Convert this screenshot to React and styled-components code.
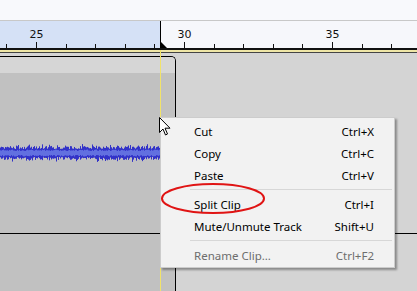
import React from "react";
import styled, { createGlobalStyle } from "styled-components";

const Global = createGlobalStyle`
  html, body { margin: 0; padding: 0; background: #d4d4d4; }
  #root { width: 417px; height: 291px; }
`;

const Screen = styled.div`
  position: relative;
  width: 417px;
  height: 291px;
  overflow: hidden;
  display: flex;
  flex-direction: column;
  font-family: "Noto Sans", "Liberation Sans", sans-serif;
`;

const TopBand = styled.div`
  height: 20px;
  flex: none;
  background: #f8f9fc;
  border-bottom: 1px solid #c8c8c8;
`;

const Ruler = styled.div`
  position: relative;
  height: 27px;
  flex: none;
  display: flex;
  background: #f6f7fb;
  border-bottom: 2px solid #111;
`;

const Selection = styled.div`
  width: 160px;
  flex: none;
  background: #d5e1f6;
  border-right: 1px solid #000;
`;

const TickLayer = styled.svg`
  position: absolute;
  left: 0;
  top: 0;
`;

const RulerLabel = styled.span`
  position: absolute;
  top: 7px;
  transform: translateX(-50%);
  font-family: "DejaVu Sans", sans-serif;
  font-size: 11px;
  line-height: 14px;
  color: #111;
`;

const Rail = styled.div`
  flex: none;
  height: 2px;
  background: #efe6a6;
  border-bottom: 1px solid #444;
`;

const Track = styled.div`
  flex: 1;
  display: flex;
  flex-direction: column;
  background: #d4d4d4;
`;

const Channel = styled.div`
  display: flex;
  height: ${(p) => p.$h}px;
  flex: ${(p) => (p.$h ? "none" : "1")};
  border-bottom: ${(p) => (p.$divider ? "1px solid #000" : "none")};
`;

const Clip = styled.div`
  width: 176px;
  flex: none;
  box-sizing: border-box;
  display: flex;
  flex-direction: column;
  background: #c1c1c1;
  border-right: 1px solid #000;
  margin-top: ${(p) => (p.$top ? 3 : 0)}px;
  border-top: ${(p) => (p.$top ? "1px solid #000" : "none")};
  border-top-right-radius: ${(p) => (p.$top ? 5 : 0)}px;
`;

const ClipHeader = styled.div`
  height: 16px;
  flex: none;
  background: #d6d6d6;
  border-top-right-radius: 4px;
`;

const ClipBody = styled.div`
  flex: 1;
  display: flex;
  align-items: center;
`;

const EditLine = styled.div`
  position: absolute;
  left: 160px;
  top: 50px;
  bottom: 0;
  width: 1px;
  background: #f1e36a;
`;

const Menu = styled.div`
  position: absolute;
  left: 160px;
  top: 117px;
  width: 235px;
  box-sizing: border-box;
  background: #f2f2f2;
  border: 1px solid #cccccc;
  box-shadow: 2px 2px 2px rgba(0, 0, 0, 0.35);
  padding: 2px 0 1px;
  display: flex;
  flex-direction: column;
`;

const Item = styled.div`
  height: 22px;
  display: flex;
  align-items: center;
  justify-content: space-between;
  padding: 0 20px 0 33px;
  font-size: 11.5px;
  color: ${(p) => (p.$disabled ? "#6d6d6d" : "#000")};
`;

const Separator = styled.div`
  height: 7px;
  display: flex;
  align-items: center;
  margin: 0 2px 0 29px;
  &::after {
    content: "";
    flex: 1;
    height: 1px;
    background: #d7d7d7;
  }
`;

const Overlay = styled.svg`
  position: absolute;
  pointer-events: none;
`;

function rand(seed) {
  let s = seed;
  return () => {
    s = (s * 9301 + 49297) % 233280;
    return s / 233280;
  };
}

function Waveform() {
  const r = rand(7);
  const w = 176;
  let peak = "";
  let rms = "";
  for (let x = 0; x < w; x++) {
    const up = 4 + r() * 3 + (r() > 0.85 ? 2 : 0);
    const dn = 4 + r() * 3 + (r() > 0.85 ? 2 : 0);
    peak += `M${x + 0.5},${10 - up}V${10 + dn}`;
    const ru = 2 + r() * 1.5;
    const rd = 2 + r() * 1.5;
    rms += `M${x + 0.5},${10 - ru}V${10 + rd}`;
  }
  return (
    <svg width={w} height={20} style={{ display: "block", marginTop: "-1px" }}>
      <path d={peak} stroke="#3232c8" strokeWidth="1" />
      <path d={rms} stroke="#6270e0" strokeWidth="1" />
    </svg>
  );
}

const ticks = [];
for (let n = 24; n <= 38; n++) ticks.push(n);
const tx = (n) => Math.round(36 + (n - 25) * 29.6) + 0.5;

const items = [
  { label: "Cut", key: "Ctrl+X" },
  { label: "Copy", key: "Ctrl+C" },
  { label: "Paste", key: "Ctrl+V" },
  { sep: true },
  { label: "Split Clip", key: "Ctrl+I" },
  { label: "Mute/Unmute Track", key: "Shift+U" },
  { sep: true },
  { label: "Rename Clip...", key: "Ctrl+F2", disabled: true },
];

export default function App() {
  return (
    <>
      <Global />
      <Screen>
        <TopBand />
        <Ruler>
          <Selection />
          <TickLayer width="417" height="27">
            {ticks.map((n) => (
              <line
                key={n}
                x1={tx(n)}
                x2={tx(n)}
                y1={n % 5 === 0 ? 21 : 23}
                y2={27}
                stroke="#111"
                strokeWidth="1"
              />
            ))}
            <polygon points="161,21 161,27 167,27" fill="#000" />
          </TickLayer>
          {[25, 30, 35].map((n) => (
            <RulerLabel key={n} style={{ left: tx(n) }}>
              {n}
            </RulerLabel>
          ))}
        </Ruler>
        <Rail />
        <Track>
          <Channel $h={180} $divider>
            <Clip $top>
              <ClipHeader />
              <ClipBody>
                <Waveform />
              </ClipBody>
            </Clip>
          </Channel>
          <Channel>
            <Clip />
          </Channel>
        </Track>
        <EditLine />
        <Menu>
          {items.map((it, i) =>
            it.sep ? (
              <Separator key={i} />
            ) : (
              <Item key={i} $disabled={it.disabled}>
                <span>{it.label}</span>
                <span>{it.key}</span>
              </Item>
            )
          )}
        </Menu>
        <Overlay width="110" height="36" style={{ left: 159, top: 181 }}>
          <ellipse cx="54" cy="17.5" rx="51" ry="14.5" fill="none" stroke="#e01414" strokeWidth="2" />
        </Overlay>
        <Overlay width="14" height="21" style={{ left: 158, top: 116 }}>
          <path
            d="M1.5,1.5 L1.5,16.5 L5,13 L7.5,19 L9.5,18 L7,12.2 L12,12.2 Z"
            fill="#fff"
            stroke="#000"
            strokeWidth="1"
            strokeLinejoin="miter"
          />
        </Overlay>
      </Screen>
    </>
  );
}
